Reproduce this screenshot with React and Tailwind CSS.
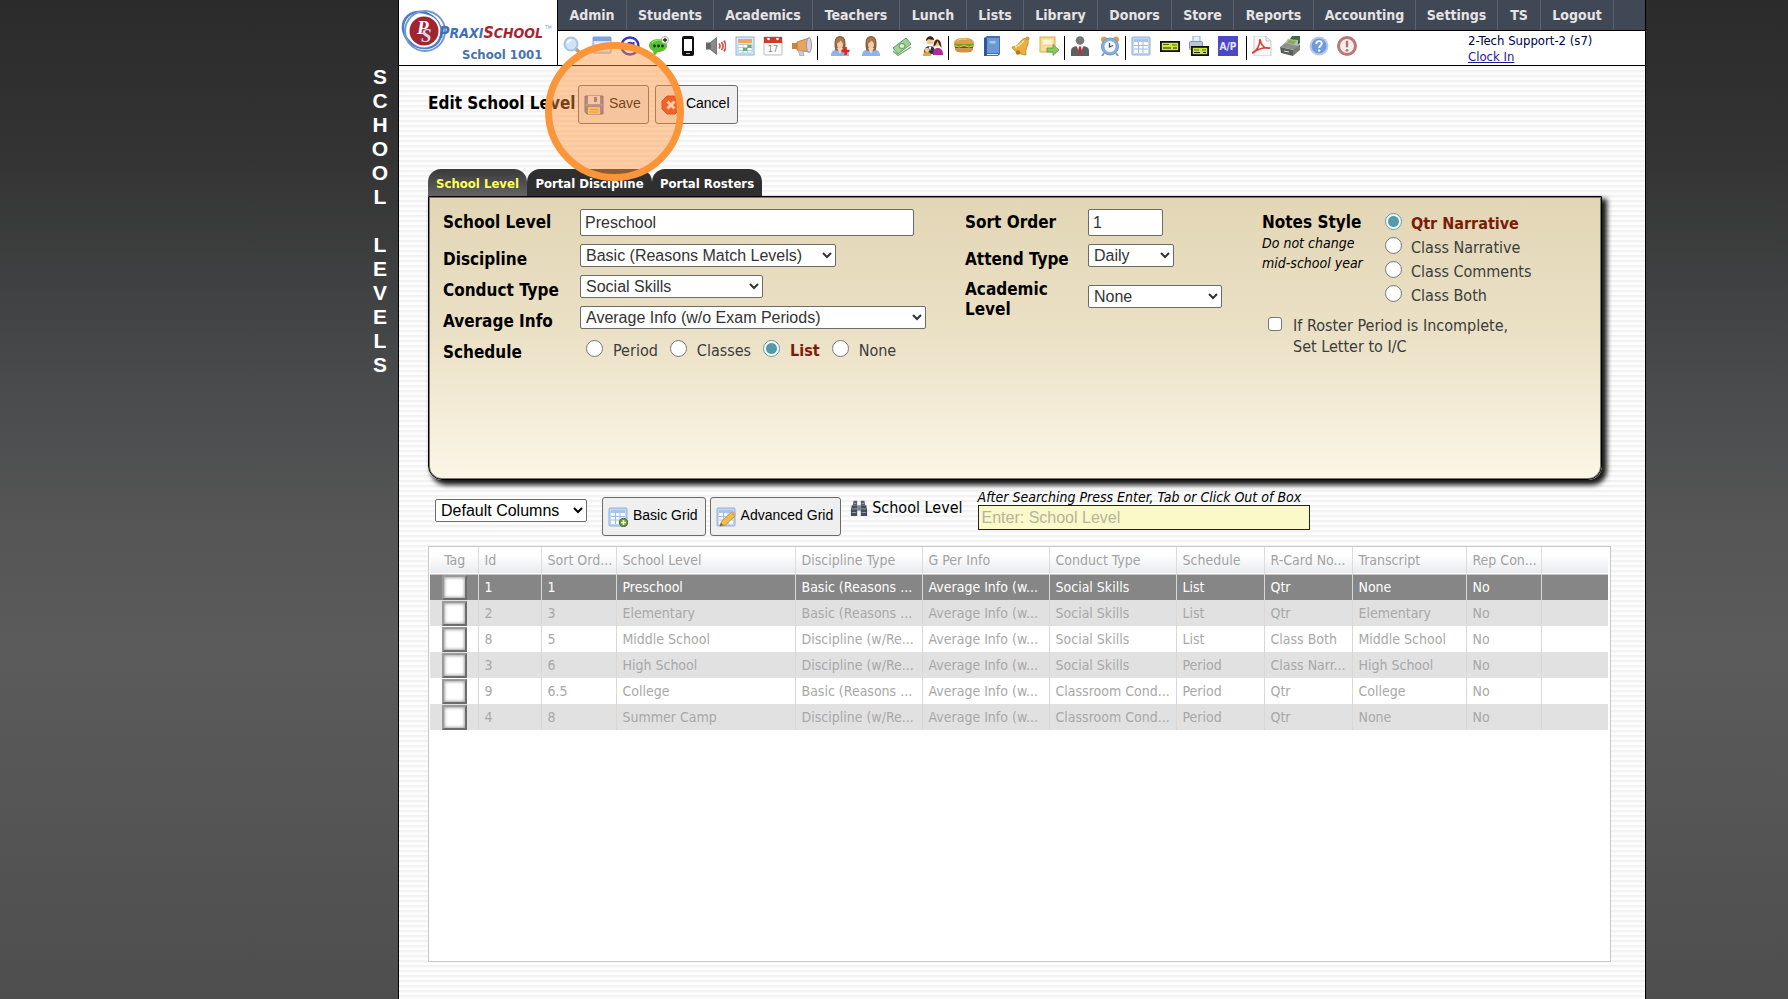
import React from "react";

const TAHOMA = "font-['DejaVu_Sans_Condensed','DejaVu_Sans',sans-serif]";
const ARIAL = "font-['Liberation_Sans',Arial,sans-serif]";

const NAV = [
  ["Admin", "w-[69px]"],
  ["Students", "w-[87px]"],
  ["Academics", "w-[99px]"],
  ["Teachers", "w-[87px]"],
  ["Lunch", "w-[67px]"],
  ["Lists", "w-[57px]"],
  ["Library", "w-[74px]"],
  ["Donors", "w-[74px]"],
  ["Store", "w-[62px]"],
  ["Reports", "w-[80px]"],
  ["Accounting", "w-[102px]"],
  ["Settings", "w-[82px]"],
  ["TS", "w-[43px]"],
  ["Logout", "w-[73px]"],
];

/* ---------- icons (20 x 20 grid) ---------- */

const Grid = () => (
  <>
    <rect x="1" y="1" width="18" height="18" rx="1" fill="#c3d5f0" stroke="#8fb0de" />
    <rect x="3" y="3" width="14" height="14" fill="#fff" />
    <rect x="3" y="3" width="14" height="3" fill="#a9c4ea" />
    <path d="M3 9.5h14M3 13h14M7.5 6v11M12 6v11" stroke="#9bbbe2" fill="none" />
  </>
);

const Person = () => (
  <>
    <path d="M1 20c0-5 3-7 9-7s9 2 9 7z" fill="#8fb2e8" />
    <path d="M5 13.500C3.500 5 5 0 10 0s6.500 5 5 13.500c-1 2-9 2-10 0z" fill="#8e6240" />
    <path d="M7 12h6l-3 6z" fill="#f3d8bb" />
    <ellipse cx="10" cy="8.500" rx="3" ry="4" fill="#f0cda8" />
    <path d="M6 8c2-.5 4-2 4.500-4 .8 2 2 3 3.500 4 .5-4-1-6.500-4-6.500S5.500 4 6 8z" fill="#a97850" />
  </>
);

const ICONS = {
  search: (
    <>
      <path d="M12 12l6 6" stroke="#c9996a" strokeWidth="3.500" strokeLinecap="round" />
      <circle cx="8" cy="8" r="6.500" fill="#cfe3fa" stroke="#a9c3e6" strokeWidth="2" />
      <path d="M4.500 7.500A4 4 0 0 1 8.500 4" stroke="#fff" strokeWidth="1.500" fill="none" />
    </>
  ),
  window: (
    <>
      <rect x="1" y="1" width="18" height="16" rx="1" fill="#dbe8f8" stroke="#7fa2d6" />
      <rect x="1" y="1" width="18" height="4" fill="#7aa3df" />
      <rect x="3" y="7" width="14" height="8" fill="#fff" />
      <path d="M5 9h2M9 9h2M13 9h2M5 12h2M9 12h2M13 12h2" stroke="#6f8fc0" strokeWidth="1.500" />
    </>
  ),
  at: (
    <>
      <circle cx="10" cy="10" r="8.500" fill="#fff" stroke="#3636c8" strokeWidth="2.500" />
      <circle cx="10" cy="10" r="3.200" fill="none" stroke="#3636c8" strokeWidth="2" />
      <path d="M13.500 6v5.500c0 2 3 2 4-.5" fill="none" stroke="#3636c8" strokeWidth="2" />
    </>
  ),
  chat: (
    <>
      <path d="M9 3c-5 0-9 3-9 6.500 0 2.500 2 4.500 4 5.500l1 5 4-4c5 0 9-2.500 9-6.500S14 3 9 3z" fill="#56c22c" />
      <path d="M3 7c2-3 9-4 12-2" stroke="#a5e886" fill="none" />
      <circle cx="5.500" cy="10" r="1.400" fill="#16350a" />
      <circle cx="9.500" cy="10" r="1.400" fill="#16350a" />
      <circle cx="13.500" cy="10" r="1.400" fill="#16350a" />
      <circle cx="16" cy="4" r="3.600" fill="#fff" stroke="#999" strokeWidth=".7" />
      <path d="M16 1.800v4.400M13.800 4h4.400" stroke="#222" strokeWidth="1.300" />
    </>
  ),
  phone: (
    <>
      <rect x="4" y="0" width="12" height="20" rx="2" fill="#111" />
      <rect x="6" y="3" width="8" height="12" fill="#fff" />
      <path d="M8 17.500h4" stroke="#bbb" />
    </>
  ),
  speaker: (
    <>
      <path d="M0 6.500h4.500v7H0z" fill="#666" />
      <path d="M4.500 6.500l6-5v17l-6-5z" fill="#8a8a8a" stroke="#555" strokeWidth=".7" />
      <path d="M13 7.500q2 2.500 0 5M15.500 6q3 4 0 8M18 4.500q3.500 5.500 0 11" stroke="#dd5450" strokeWidth="1.800" fill="none" />
    </>
  ),
  agenda: (
    <>
      <rect x="1" y="1" width="18" height="18" fill="#dfeafa" stroke="#8fb0de" />
      <rect x="3" y="3" width="14" height="4" fill="#f2a65a" />
      <path d="M3 8.500h14V17H3zM3 11.500h14M3 14.500h14M8 8.500V17M12.500 8.500V17" fill="#fff" stroke="#a9bfdf" strokeWidth=".8" />
      <path d="M8 12h4v3H8zM12.500 9h4v3h-4z" fill="#64b36b" />
    </>
  ),
  calendar: (
    <>
      <rect x="1" y="1" width="18" height="18" rx="1" fill="#fafafa" stroke="#bbb" />
      <rect x="1" y="1" width="18" height="6" fill="#cf3a2b" />
      <circle cx="5.500" cy="3" r="1.300" fill="#fff" />
      <circle cx="14.500" cy="3" r="1.300" fill="#fff" />
      <text x="10" y="16" textAnchor="middle" fontSize="9" fill="#888">17</text>
    </>
  ),
  megaphone: (
    <>
      <path d="M0 7h5v6H0z" fill="#c88443" />
      <path d="M5 6l12-4v14L5 14z" fill="#e7a45c" stroke="#b57432" strokeWidth=".8" />
      <ellipse cx="17" cy="9" rx="2.500" ry="7.500" fill="#d8d2e0" stroke="#9c93a6" />
      <path d="M6 14l5 1 1 5H8z" fill="#c9c9cf" stroke="#999" strokeWidth=".6" />
    </>
  ),
  personAdd: (
    <>
      <Person />
      <path d="M15.500 11v8M11.500 15h8" stroke="#e0241c" strokeWidth="2.500" />
    </>
  ),
  person: <Person />,
  money: (
    <>
      <path d="M1 12L14 2l5 6L6 18z" fill="#9fce97" stroke="#5d9a5c" />
      <path d="M1 15l5 4.500L19 11" fill="none" stroke="#6fae6d" strokeWidth="1.300" />
      <ellipse cx="10" cy="10" rx="3" ry="2.500" fill="#d9efd3" stroke="#5d9a5c" />
    </>
  ),
  people: (
    <>
      <circle cx="7" cy="5" r="3.500" fill="#f0c69b" />
      <path d="M3 5c0-6 8-6 8-1-3 0-5-1-5-1z" fill="#3a2517" />
      <circle cx="14" cy="7" r="3.500" fill="#f0c69b" />
      <path d="M10.500 11c0-10 8-10 8 1-2-2-3-5-4-7-1 3-2 4-4 6z" fill="#4a2a16" />
      <path d="M1 18c0-6 2-8 6-8s5 3 5 8z" fill="#333" />
      <path d="M10 19c0-6 2-7 5-7s5 2 5 7z" fill="#b02a9c" />
      <path d="M5.500 10.500L7 15l1.500-4.500z" fill="#fff" />
      <circle cx="4" cy="14" r="2.300" fill="#f0c69b" />
      <path d="M0 20c0-3 1-4 4-4s4 1 4 4z" fill="#e5a53d" />
    </>
  ),
  burger: (
    <>
      <path d="M0 8c0-5 4-6 10-6s10 1 10 6z" fill="#d9a04c" />
      <path d="M3 5c2-2 6-2.500 10-1.500" stroke="#f3cf90" fill="none" />
      <path d="M0 8h20v2.500H0z" fill="#6fa12d" />
      <path d="M1 10h18v2.500H1z" fill="#7a4a24" />
      <path d="M0 9.500l5 1.500 5-1.500 5 1.500 5-1.500" stroke="#f3cf3f" fill="none" />
      <path d="M1 12.500h18c0 3-2 4-9 4s-9-1-9-4z" fill="#cf9343" />
    </>
  ),
  book: (
    <>
      <path d="M2 2l3-2h13v18l-2 2H2z" fill="#3f6fb5" />
      <path d="M5 2h12v15H5z" fill="#6c98d4" />
      <path d="M2 2h3v18H2z" fill="#2f5896" />
      <path d="M7.500 5h6v2.500h-6z" fill="#a9c6ee" />
      <path d="M5 18.500h11" stroke="#e6eefb" />
    </>
  ),
  bell: (
    <>
      <path d="M1 11c6 0 8-6 11-8 4-2 6 1 5 5-1 3-3 6-2 11C11 19 3 16 1 11z" fill="#e8b13f" stroke="#b67f1e" strokeWidth=".8" />
      <path d="M4 11c5-1 7-5 9-6" stroke="#fbe3a0" strokeWidth="1.500" fill="none" />
      <circle cx="16.500" cy="2.500" r="2" fill="#d9992a" />
      <circle cx="7" cy="16.500" r="2.300" fill="#b67a1a" />
    </>
  ),
  export: (
    <>
      <rect x="1" y="1" width="15" height="15" fill="#f6df9a" stroke="#d9ad4a" />
      <rect x="3" y="3" width="11" height="6" fill="#fdf4d3" stroke="#e4c67a" strokeWidth=".6" />
      <path d="M8 12h6V8.500l6 5.500-6 5.500V16H8z" fill="#8cc665" stroke="#5a9a3c" strokeWidth=".8" />
    </>
  ),
  tie: (
    <>
      <circle cx="10" cy="4.500" r="4.300" fill="#777" />
      <path d="M1 20v-5c0-4 3-5 9-5s9 1 9 5v5z" fill="#5f5f63" />
      <path d="M6.500 10l3.500 8 3.500-8z" fill="#fff" />
      <path d="M9 10.500h2l1 5-2 3-2-3z" fill="#c22a2a" />
    </>
  ),
  clock: (
    <>
      <circle cx="4" cy="3.500" r="3" fill="#dba04e" />
      <circle cx="16" cy="3.500" r="3" fill="#dba04e" />
      <path d="M4 17l-2 3M16 17l2 3" stroke="#7c9ac4" strokeWidth="2" />
      <circle cx="10" cy="10.500" r="8.500" fill="#86aede" stroke="#6b95cc" />
      <circle cx="10" cy="10.500" r="5.500" fill="#f5f9ff" />
      <path d="M9.500 7v4l3.500-1.500" stroke="#555" strokeWidth="1.300" fill="none" />
    </>
  ),
  table: <Grid />,
  check: (
    <>
      <rect x="0.900" y="5.900" width="18.200" height="9.200" fill="#cfe63a" stroke="#111" strokeWidth="1.800" />
      <path d="M3 8.500h6M12 9h5" stroke="#5c6a12" />
      <path d="M3 12h8M13 12h4" stroke="#222" />
    </>
  ),
  printCheck: (
    <>
      <path d="M4 0h7v7H4z" fill="#e8f1fc" stroke="#8aa9d6" />
      <rect x="0.500" y="5.500" width="13" height="8" rx="1" fill="#b9c6da" stroke="#8291ad" />
      <rect x="2.900" y="10.900" width="16.200" height="8.200" fill="#cfe63a" stroke="#111" strokeWidth="1.800" />
      <path d="M5 14h5M13 14h4" stroke="#5c6a12" />
      <path d="M5 16.500h6M14 16.500h3" stroke="#222" />
    </>
  ),
  ap: (
    <>
      <rect width="20" height="20" fill="#4b49c4" />
      <text x="10" y="14" textAnchor="middle" fontSize="10" fontWeight="bold" fill="#e8e8ff">A/P</text>
    </>
  ),
  pdf: (
    <>
      <path d="M2 0h12l5 5v15H2z" fill="#f8f8f8" stroke="#c9c9c9" />
      <path d="M14 0v5h5" fill="#e6e6e6" stroke="#c9c9c9" />
      <path d="M0 17c4-1 8-7 8-14 1 7 5 10 10 9-6-1-12 1-18 5z" fill="none" stroke="#cf4436" strokeWidth="1.600" />
    </>
  ),
  register: (
    <>
      <path d="M10 3l2-3h8v7l-3 3z" fill="#3f6b3e" />
      <path d="M4 8l4-5 10 1v6l-4 2z" fill="#b5b8b5" />
      <path d="M7 7l2-3 7 1-2 3z" fill="#7fb04c" />
      <path d="M0 11l5-4 13 3-4 4z" fill="#8d918d" />
      <path d="M0 11l13 3v6L1 17z" fill="#5a5e5a" />
      <path d="M13 14l7-6v6l-7 6z" fill="#787d78" />
      <path d="M4 15l5 1" stroke="#ddd" />
    </>
  ),
  help: (
    <>
      <circle cx="10" cy="10" r="8.500" fill="#6f9bdb" stroke="#b4cbec" strokeWidth="2" />
      <path d="M7.300 8c0-4 5.500-3.500 5.500-.5 0 2-2.600 2-2.600 4.500" fill="none" stroke="#fff" strokeWidth="1.800" />
      <circle cx="10.200" cy="14.500" r="1.200" fill="#fff" />
    </>
  ),
  alert: (
    <>
      <circle cx="10" cy="10" r="8.500" fill="#f6eeee" stroke="#b87878" strokeWidth="3" />
      <path d="M10 4.800v6.500" stroke="#b87070" strokeWidth="2.400" />
      <circle cx="10" cy="14.300" r="1.400" fill="#b87070" />
    </>
  ),
  save: (
    <>
      <path d="M1 1h18v18H3l-2-2z" fill="#7c84b8" stroke="#5a62a0" />
      <rect x="4" y="1" width="12" height="8" fill="#eef0f8" />
      <rect x="10" y="2" width="3" height="5" fill="#7079b8" />
      <path d="M1 10h18" stroke="#a4abd8" />
      <rect x="4" y="12" width="12" height="7" fill="#f4e27a" />
      <path d="M6 14.500h8M6 17h8" stroke="#c9ae3c" />
    </>
  ),
  cancel: (
    <>
      <path d="M6 1h8l5 5v8l-5 5H6l-5-5V6z" fill="#e23a22" stroke="#b82813" />
      <path d="M6.500 6.500l7 7M13.500 6.500l-7 7" stroke="#fff" strokeWidth="3" />
    </>
  ),
  gridAdd: (
    <>
      <Grid />
      <circle cx="15.500" cy="15.500" r="4.200" fill="#6f9a3c" stroke="#44701c" />
      <path d="M15.500 13v5M13 15.500h5" stroke="#fff" strokeWidth="1.500" />
    </>
  ),
  gridEdit: (
    <>
      <Grid />
      <path d="M4 19l1.500-4.500L15 5.500l4 3.500-9.500 9z" fill="#f0bd4a" stroke="#b98522" strokeWidth=".8" />
      <path d="M15 5.500l4 3.500 1-2-3-3z" fill="#d9a2a0" />
      <path d="M4 19l1-3 2 2z" fill="#555" />
    </>
  ),
  binoculars: (
    <>
      <path d="M4 2h4v5H3zM12 2h4l1 5h-5z" fill="#5b606b" />
      <path d="M2 7h6v12H1v-7zM12 7h6l1 5v7h-7z" fill="#464c59" />
      <path d="M8 7h4v6H8z" fill="#7b8391" />
      <path d="M2 11h6M12 11h6M2 15h5M13 15h5M4 5h3M13 5h3" stroke="#9aa3b4" />
    </>
  ),
};

function Icon({ name, className = "size-[20px]" }) {
  return (
    <svg viewBox="0 0 20 20" className={`shrink-0 ${className}`} aria-hidden="true">
      {ICONS[name]}
    </svg>
  );
}

const TOOL_GROUPS = [
  ["w-[249px]", ["search", "window", "at", "chat", "phone", "speaker", "agenda", "calendar", "megaphone"]],
  ["w-[120px] pl-[7px]", ["personAdd", "person", "money", "people"]],
  ["w-[105px]", ["burger", "book", "bell", "export"]],
  ["w-[50px]", ["tie", "clock"]],
  ["w-[110px] pr-[3px]", ["table", "check", "printCheck", "ap"]],
  ["w-[105px]", ["pdf", "register", "help", "alert"]],
];

function Logo() {
  return (
    <svg viewBox="0 0 158 65" className="h-[65px] w-[158px]" role="img" aria-label="PraxiSchool School 1001">
      <ellipse cx="23" cy="30" rx="20" ry="17" transform="rotate(35 23 30)" fill="none" stroke="#4f7cc0" strokeWidth="2.500" />
      <ellipse cx="26" cy="31" rx="20" ry="20" fill="none" stroke="#6f98d4" strokeWidth="2" />
      <circle cx="25" cy="31" r="16.500" fill="#fff" />
      <circle cx="25" cy="31" r="14.500" fill="#a02530" />
      <text x="18" y="34" fontFamily="Liberation Serif" fontStyle="italic" fontWeight="bold" fontSize="19" fill="#fff">P</text>
      <text x="22" y="42" fontFamily="Liberation Serif" fontStyle="italic" fontWeight="bold" fontSize="19" fill="#cfdcf2">S</text>
      <text x="40" y="38" fontFamily="DejaVu Sans Condensed" fontStyle="italic" fontWeight="bold" fontSize="16" fill="#3f6fb5">
        P<tspan fontSize="14">RAXI</tspan>
        <tspan fill="#a8232d">S</tspan>
        <tspan fill="#a8232d" fontSize="14">CHOOL</tspan>
      </text>
      <text x="146" y="29" fontFamily="DejaVu Sans Condensed" fontSize="5" fill="#7aa0d8">TM</text>
      <text x="63" y="59" fontFamily="DejaVu Sans Condensed" fontWeight="bold" fontSize="13" fill="#4672b0">School 1001</text>
    </svg>
  );
}

function Header() {
  return (
    <header className="flex border-b border-black bg-white">
      <a href="#home" className="block h-[65px] w-[159px] shrink-0 border-r border-black">
        <Logo />
      </a>
      <div className="min-w-0 flex-1">
        <nav className="flex h-[31px] border-b border-black bg-[#414855]">
          {NAV.map(([name, width]) => (
            <a
              key={name}
              href={`#${name.toLowerCase()}`}
              className={`flex h-full shrink-0 items-center justify-center border-r border-[#5a6270] text-[14px] font-bold text-[#e4e4e4] ${width}`}
            >
              {name}
            </a>
          ))}
        </nav>
        <div className="flex h-[34px] items-start pl-[5px]">
          {TOOL_GROUPS.map(([layout, names], i) => (
            <React.Fragment key={layout}>
              {i > 0 && <span className="mx-[5px] mt-[5px] h-[24px] w-px bg-black" />}
              <div className={`mt-[5px] flex shrink-0 justify-between ${layout}`}>
                {names.map((n) => (
                  <button key={n} type="button" aria-label={n}>
                    <Icon name={n} className="block size-[20px]" />
                  </button>
                ))}
              </div>
            </React.Fragment>
          ))}
          <div className="ml-auto w-[177px] pt-[2px] text-[13px] leading-[16px] text-[#00004c]">
            <div>2-Tech Support-2 (s7)</div>
            <a href="#clock" className="text-[#1a1a9c] underline">Clock In</a>
          </div>
        </div>
      </div>
    </header>
  );
}

const RADIO =
  "size-[17px] shrink-0 appearance-none rounded-full border border-[#767676] bg-white checked:border-[#5b9aa8] checked:bg-[radial-gradient(circle,#559aa8_5px,#fff_6px)]";
const SELECT = `block h-[23px] rounded-[2px] border border-[#6b6b6b] bg-white px-px text-[16px] leading-[20px] ${ARIAL}`;
const INPUT = `block h-[27px] rounded-[2px] border border-[#6b6b6b] bg-white px-[4px] text-[16px] text-[#333] ${ARIAL}`;
const LABEL = "text-[17px] leading-[20px] font-bold text-black";
const BUTTON = `flex h-[39px] items-center gap-[5px] rounded-[3px] border border-[#6b6b6b] bg-[#efefef] pr-[7px] pl-[5px] text-[14px] text-black ${ARIAL}`;
const BUTTON_TEXT = "pb-[2px]";

function Radio({ name, label, checked, className = "" }) {
  return (
    <label className={`flex items-center ${className}`}>
      <input type="radio" name={name} defaultChecked={checked} className={RADIO} />
      <span className={`pt-[5px] text-[16px] leading-[20px] ${checked ? "font-bold text-[#7a1c08]" : "text-[#3c3c3c]"}`}>
        {label}
      </span>
    </label>
  );
}

function Row({ id, label, layout, labelClass = "", children }) {
  return (
    <div className={`grid ${layout}`}>
      <label htmlFor={id} className={`${LABEL} ${labelClass}`}>{label}</label>
      {children}
    </div>
  );
}

const COL_A = "grid-cols-[137px_1fr]";
const COL_B = "grid-cols-[123px_1fr]";

function Panel() {
  return (
    <section className="flex h-[284px] rounded-b-[14px] border border-black bg-linear-to-b from-[#e2d6b5] via-[#ebe1c6] to-[#fbf6e7] pt-[12px] pl-[14px] shadow-[inset_0_0_0_1px_#7c7768,4px_4px_5px_1px_rgba(0,0,0,0.9)]">
      <div className="flex w-[522px] flex-col gap-[8px]">
        <Row id="level" label="School Level" layout={COL_A} labelClass="pt-[3px]">
          <input id="level" defaultValue="Preschool" className={`${INPUT} w-[334px]`} />
        </Row>
        <Row id="discipline" label="Discipline" layout={`${COL_A} h-[23px]`} labelClass="pt-[5px]">
          <select id="discipline" className={`${SELECT} w-[256px] text-[#333]`}>
            <option>Basic (Reasons Match Levels)</option>
          </select>
        </Row>
        <Row id="conduct" label="Conduct Type" layout={`${COL_A} h-[23px]`} labelClass="pt-[5px]">
          <select id="conduct" className={`${SELECT} w-[183px] text-[#333]`}>
            <option>Social Skills</option>
          </select>
        </Row>
        <Row id="average" label="Average Info" layout={`${COL_A} h-[23px]`} labelClass="pt-[5px]">
          <select id="average" className={`${SELECT} w-[346px] text-[#333]`}>
            <option>Average Info (w/o Exam Periods)</option>
          </select>
        </Row>
        <fieldset className={`grid h-[23px] ${COL_A}`}>
          <span className={`${LABEL} pt-[5px]`}>Schedule</span>
          <div className="flex h-[23px] gap-[12px] pl-[6px]">
            <Radio name="schedule" label="Period" className="gap-[10px]" />
            <Radio name="schedule" label="Classes" className="gap-[10px]" />
            <Radio name="schedule" label="List" checked className="gap-[10px]" />
            <Radio name="schedule" label="None" className="gap-[10px]" />
          </div>
        </fieldset>
      </div>

      <div className="flex w-[297px] flex-col gap-[8px]">
        <Row id="order" label="Sort Order" layout={COL_B} labelClass="pt-[3px]">
          <input id="order" defaultValue="1" className={`${INPUT} w-[75px]`} />
        </Row>
        <Row id="attend" label="Attend Type" layout={`${COL_B} h-[23px]`} labelClass="pt-[5px]">
          <select id="attend" className={`${SELECT} w-[86px] text-[#333]`}>
            <option>Daily</option>
          </select>
        </Row>
        <div className="pt-[4px]">
          <Row id="academic" label="Academic Level" layout={COL_B} labelClass="w-[100px]">
            <select id="academic" className={`${SELECT} mt-[6px] w-[134px] text-[#333]`}>
              <option>None</option>
            </select>
          </Row>
        </div>
      </div>

      <div>
        <fieldset className="flex">
          <div className="w-[123px] pt-[3px]">
            <div className={LABEL}>Notes Style</div>
            <p className="pt-px text-[14px] leading-[20px] text-black italic">
              Do not change
              <br />
              mid-school year
            </p>
          </div>
          <div className="flex flex-col">
            {["Qtr Narrative", "Class Narrative", "Class Comments", "Class Both"].map((t, i) => (
              <Radio key={t} name="notes" label={t} checked={i === 0} className="h-[24px] gap-[9px]" />
            ))}
          </div>
        </fieldset>
        <label className="mt-[10px] flex gap-[11px] pl-[6px]">
          <input
            type="checkbox"
            className="mt-[2px] size-[14px] shrink-0 appearance-none rounded-[3px] border border-[#767676] bg-white checked:bg-[#559aa8]"
          />
          <span className="text-[16px] leading-[21px] text-[#3c3c3c]">
            If Roster Period is Incomplete,
            <br />
            Set Letter to I/C
          </span>
        </label>
      </div>
    </section>
  );
}

const COLUMNS = [
  ["Tag", "w-[48px]"],
  ["Id", "w-[63px]"],
  ["Sort Ord...", "w-[75px]"],
  ["School Level", "w-[179px]"],
  ["Discipline Type", "w-[127px]"],
  ["G Per Info", "w-[127px]"],
  ["Conduct Type", "w-[127px]"],
  ["Schedule", "w-[88px]"],
  ["R-Card No...", "w-[88px]"],
  ["Transcript", "w-[114px]"],
  ["Rep Con...", "w-[75px]"],
  ["", ""],
];

const BASIC = "Basic (Reasons ...";
const WITH_REASONS = "Discipline (w/Re...";
const AVG = "Average Info (w...";
const SOCIAL = "Social Skills";
const CLASSROOM = "Classroom Cond...";
const ROWS = [
  ["1", "1", "Preschool", BASIC, AVG, SOCIAL, "List", "Qtr", "None", "No", ""],
  ["2", "3", "Elementary", BASIC, AVG, SOCIAL, "List", "Qtr", "Elementary", "No", ""],
  ["8", "5", "Middle School", WITH_REASONS, AVG, SOCIAL, "List", "Class Both", "Middle School", "No", ""],
  ["3", "6", "High School", WITH_REASONS, AVG, SOCIAL, "Period", "Class Narr...", "High School", "No", ""],
  ["9", "6.5", "College", BASIC, AVG, CLASSROOM, "Period", "Qtr", "College", "No", ""],
  ["4", "8", "Summer Camp", WITH_REASONS, AVG, CLASSROOM, "Period", "Qtr", "None", "No", ""],
];

function DataGrid() {
  return (
    <div className="mr-[34px] mb-[37px] flex-1 border border-[#c8c8c8] bg-white pr-[2px] pl-px">
      <table className="w-full table-fixed border-collapse text-[14px] leading-[20px]">
        <thead>
          <tr className="h-[27px] border-b border-[#c4c4c4] bg-linear-to-b from-white from-30% to-[#e9ebee]">
            {COLUMNS.map(([name, width], i) => (
              <th
                key={i}
                className={`pt-0 pr-0 pb-px font-normal whitespace-nowrap text-[#a2a2a2] ${width} ${i === 0 ? "pl-[2px] text-center" : "pl-[6px] text-left"} ${i < 11 ? "border-r border-[#dcdcdc]" : ""}`}
              >
                {name}
              </th>
            ))}
          </tr>
        </thead>
        <tbody>
          {ROWS.map((row, r) => (
            <tr
              key={row[0]}
              className={`h-[26px] ${r === 0 ? "bg-[#868686] text-white" : r % 2 ? "bg-[#e1e1e1] text-[#a8a8a8]" : "bg-white text-[#a8a8a8]"}`}
            >
              <td className="border-r border-[#d8d8d8] py-0 pr-0 pl-[2px]">
                <input
                  type="checkbox"
                  aria-label={`Tag ${row[2]}`}
                  className="mx-auto block size-[25px] appearance-none border-2 border-[#9a9a9a] border-r-[#6c6c6c] border-b-[#6c6c6c] bg-white shadow-[inset_0_0_3px_1px_#a8a8a8] checked:bg-[#777]"
                />
              </td>
              {row.map((cell, c) => (
                <td key={c} className={`pt-0 pr-0 pb-px pl-[6px] whitespace-nowrap ${c < 10 ? "border-r border-[#d8d8d8]" : ""}`}>
                  {cell}
                </td>
              ))}
            </tr>
          ))}
        </tbody>
      </table>
    </div>
  );
}

function Tabs() {
  const base = "flex h-[27px] items-center justify-center rounded-t-[13px] pt-[2px] text-[13px] font-bold";
  return (
    <div className="flex" role="tablist">
      <button type="button" role="tab" aria-selected="true" className={`${base} w-[99px] bg-linear-to-b from-[#3a3a3a] to-[#646464] text-[#ffff5c]`}>
        School Level
      </button>
      <button type="button" role="tab" aria-selected="false" className={`${base} w-[125px] bg-[#2f2f2f] text-white`}>
        Portal Discipline
      </button>
      <button type="button" role="tab" aria-selected="false" className={`${base} w-[110px] bg-[#2f2f2f] text-white`}>
        Portal Rosters
      </button>
    </div>
  );
}

export default function App() {
  return (
    <div className={`flex min-h-screen bg-[linear-gradient(to_bottom,#2b2b2b_0%,#333_15%,#4b4c4e_40%,#555_52%,#5a5b5a_65%,#4e4e4e_100%)] ${TAHOMA}`}>
      <aside className="flex w-[398px] shrink-0 flex-col items-end pt-[65px] pr-[8px]">
        <h2 aria-label="School Levels" className={`w-[20px] text-center text-[21px] leading-[24px] font-bold text-white ${ARIAL}`}>
          {"SCHOOL LEVELS".split("").map((c, i) => (
            <span key={i} className="block h-[24px]">{c}</span>
          ))}
        </h2>
      </aside>

      <main className="flex min-w-0 flex-1 flex-col border-x border-black bg-white bg-[repeating-linear-gradient(to_bottom,#f1f1f1_0px,#f5f5f5_2px,#fff_3px,#fcfcfc_5px)]">
        <Header />
        <div className="flex flex-1 flex-col pl-[29px]">
          <div className="flex h-[103px] items-start gap-[6px] pt-[19px]">
            <h1 className="w-[144px] pt-[8px] text-[17px] leading-[20px] font-bold whitespace-nowrap text-black">
              Edit School Level
            </h1>
            <div className="relative">
              <button type="button" className={BUTTON}>
                <Icon name="save" />
                <span className={BUTTON_TEXT}>Save</span>
              </button>
              <div className="pointer-events-none absolute top-[-43px] left-[-33px] z-10 size-[139px] rounded-full border-[7px] border-[#fa9539] bg-[#ff9238]/45" />
            </div>
            <button type="button" className={BUTTON}>
              <Icon name="cancel" />
              <span className={BUTTON_TEXT}>Cancel</span>
            </button>
          </div>

          <div className="mr-[43px]">
            <Tabs />
            <Panel />
          </div>

          <div className="flex h-[66px] items-start pt-[9px] pl-[7px]">
            <select aria-label="Columns" className={`${SELECT} mt-[10px] w-[152px] text-black`}>
              <option>Default Columns</option>
            </select>
            <div className="mt-[8px] ml-[15px] flex gap-[4px]">
              <button type="button" className={BUTTON}>
                <Icon name="gridAdd" />
                <span className={BUTTON_TEXT}>Basic Grid</span>
              </button>
              <button type="button" className={BUTTON}>
                <Icon name="gridEdit" />
                <span className={BUTTON_TEXT}>Advanced Grid</span>
              </button>
            </div>
            <label htmlFor="search" className="mt-[9px] ml-[9px] flex items-center gap-[4px] text-[16px] leading-[20px] text-black">
              <Icon name="binoculars" className="size-[18px]" />
              School Level
            </label>
            <div className="ml-[15px]">
              <div className="text-[14px] leading-[16px] text-black italic">After Searching Press Enter, Tab or Click Out of Box</div>
              <input
                id="search"
                placeholder="Enter: School Level"
                className={`block h-[25px] w-[332px] border border-[#222] bg-[#fafac8] px-[3px] text-[16px] placeholder:text-[#b4b4a0] ${ARIAL}`}
              />
            </div>
          </div>

          <DataGrid />
        </div>
      </main>
      <div className="w-[142px] shrink-0" />
    </div>
  );
}
